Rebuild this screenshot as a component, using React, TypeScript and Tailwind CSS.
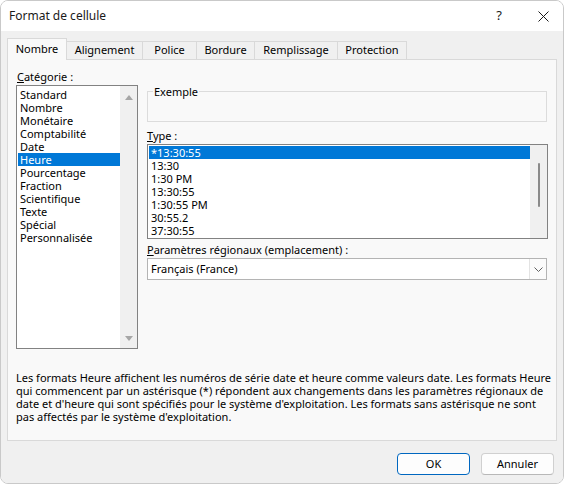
import React from "react";

const CATEGORIES = [
  "Standard",
  "Nombre",
  "Monétaire",
  "Comptabilité",
  "Date",
  "Heure",
  "Pourcentage",
  "Fraction",
  "Scientifique",
  "Texte",
  "Spécial",
  "Personnalisée",
];

const TYPES = ["*13:30:55", "13:30", "1:30 PM", "13:30:55", "1:30:55 PM", "30:55.2", "37:30:55"];

const TABS = [
  { label: "Nombre", w: "w-[60px]" },
  { label: "Alignement", w: "w-[77px]" },
  { label: "Police", w: "w-[55px]" },
  { label: "Bordure", w: "w-[59px]" },
  { label: "Remplissage", w: "w-[84px]" },
  { label: "Protection", w: "w-[70px]" },
];

const DESCRIPTION = [
  "Les formats Heure affichent les numéros de série date et heure comme valeurs date. Les formats Heure",
  "qui commencent par un astérisque (*) répondent aux changements dans les paramètres régionaux de",
  "date et d'heure qui sont spécifiés pour le système d'exploitation. Les formats sans astérisque ne sont",
  "pas affectés par le système d'exploitation.",
];

function Triangle({ down }: { down?: boolean }) {
  return (
    <svg width="8" height="5" viewBox="0 0 8 5">
      <path d={down ? "M0 0 H8 L4 5 Z" : "M0 5 H8 L4 0 Z"} fill="#a6a6a6" />
    </svg>
  );
}

export default function App() {
  return (
    <div className="w-[564px] h-[484px] bg-white font-['Noto_Sans','Open_Sans',sans-serif] text-[11px] text-black">
      <div className="h-full flex flex-col rounded-[8px] border border-[#c9c9c9] overflow-hidden">
        {/* title bar */}
        <div className="h-[30px] shrink-0 bg-white flex items-center pl-[8px] pr-[14px]">
          <span className="text-[12px] text-[#1a1a1a]">Format de cellule</span>
          <span className="ml-auto text-[13px] text-[#1a1a1a] mr-[36px]">?</span>
          <svg width="11" height="11" viewBox="0 0 11 11">
            <path d="M0.5 0.5 L10.5 10.5 M10.5 0.5 L0.5 10.5" stroke="#1a1a1a" strokeWidth="1" />
          </svg>
        </div>

        <div className="flex-1 bg-[#f0f0f0] flex flex-col px-[6px] pt-[7px]">
          {/* tabs */}
          <div className="h-[21px] flex items-end">
            {TABS.map((t, i) => (
              <div
                key={t.label}
                className={`${t.w} -ml-px first:ml-0 flex items-center justify-center border-l border-t border-r border-[#d9d9d9] ${
                  i === 0 ? "h-[22px] mb-[-1px] bg-[#f9f9f9] relative z-10" : "h-[18px] bg-[#f0f0f0]"
                }`}
              >
                {t.label}
              </div>
            ))}
          </div>

          {/* panel */}
          <div className="h-[382px] border border-[#d9d9d9] bg-[#f9f9f9] flex flex-col px-[8px] pt-[10px] pb-[17px]">
            <div className="flex gap-[9px]">
              {/* category */}
              <div className="w-[122px] flex flex-col">
                <div className="h-[13px] leading-[13px] pl-px">
                  <u>C</u>atégorie :
                </div>
                <div className="mt-[2px] h-[264px] border border-[#828282] bg-white flex">
                  <div className="flex-1 pt-[2px] pl-px">
                    {CATEGORIES.map((c) => (
                      <div
                        key={c}
                        className={`h-[13px] leading-[13px] pl-[2px] ${
                          c === "Heure" ? "bg-[#0078d7] text-white" : ""
                        }`}
                      >
                        {c}
                      </div>
                    ))}
                  </div>
                  <div className="w-[17px] bg-[#f0f0f0] flex flex-col items-center justify-between pt-[9px] pb-[7px]">
                    <Triangle />
                    <Triangle down />
                  </div>
                </div>
              </div>

              {/* right column */}
              <div className="w-[401px] flex flex-col">
                <div className="mt-[21px] h-[31px] w-[400px] border border-[#dcdcdc] relative">
                  <span className="absolute -top-[7px] left-[5px] px-px bg-[#f9f9f9] leading-[13px]">Exemple</span>
                </div>

                <div className="mt-[7px] h-[13px] leading-[13px]">
                  <u>T</u>ype :
                </div>
                <div className="mt-[2px] h-[95px] border border-[#828282] bg-white flex">
                  <div className="flex-1 py-px pl-px">
                    {TYPES.map((t, i) => (
                      <div
                        key={i}
                        className={`h-[13px] leading-[13px] pl-[2px] ${i === 0 ? "bg-[#0078d7] text-white" : ""}`}
                      >
                        {t}
                      </div>
                    ))}
                  </div>
                  <div className="w-[17px] bg-[#f0f0f0] flex justify-center pt-[18px]">
                    <div className="w-[2px] h-[44px] rounded-full bg-[#8a8a8a]" />
                  </div>
                </div>

                <div className="mt-[4px] h-[13px] leading-[13px]">
                  <u>P</u>aramètres régionaux (emplacement) :
                </div>
                <div className="mt-[2px] h-[22px] w-[400px] border border-[#b4b4b4] bg-white flex items-stretch">
                  <div className="flex-1 flex items-center pl-[3px]">Français (France)</div>
                  <div className="w-[17px] border-l border-[#e3e3e3] bg-[#fbfbfb] flex items-center justify-center">
                    <svg width="9" height="5" viewBox="0 0 9 5">
                      <path d="M0.5 0.5 L4.5 4.5 L8.5 0.5" fill="none" stroke="#606060" strokeWidth="1" />
                    </svg>
                  </div>
                </div>
              </div>
            </div>

            <div className="mt-auto">
              {DESCRIPTION.map((l) => (
                <div key={l} className="h-[13px] leading-[13px] whitespace-nowrap">
                  {l}
                </div>
              ))}
            </div>
          </div>

          {/* buttons */}
          <div className="mt-[12px] flex justify-end gap-[11px] pr-[3px]">
            <button className="w-[73px] h-[22px] rounded-[4px] border border-[#0067c0] bg-[#fdfdfd] text-[11px]">
              OK
            </button>
            <button className="w-[73px] h-[22px] rounded-[4px] border border-[#d0d0d0] border-b-[#b8b8b8] bg-[#fdfdfd] text-[11px]">
              Annuler
            </button>
          </div>
        </div>
      </div>
    </div>
  );
}
